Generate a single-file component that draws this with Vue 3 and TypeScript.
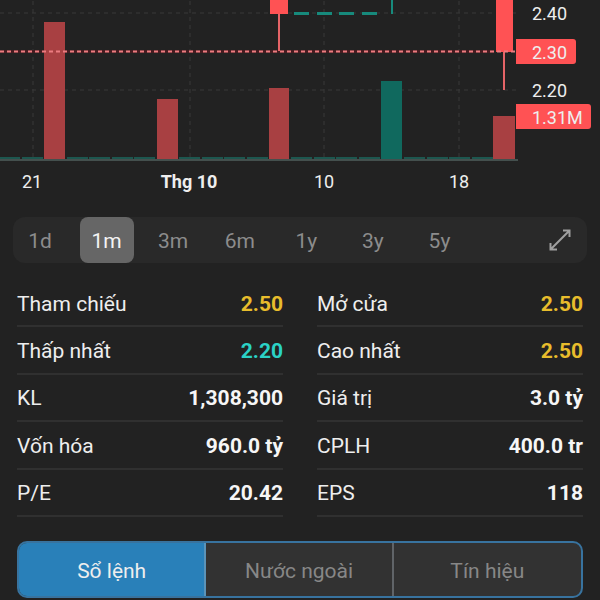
<script setup lang="ts">
import { ref } from 'vue'

interface Bar { x: number; y: number; w: number; up?: boolean }
interface Stat { label: string; value: string; tone?: 'ref' | 'floor' }

const gridX = [33, 190, 324, 459]
const gridY = [13, 90]

const bars: Bar[] = [
  { x: 44, y: 22, w: 21 },
  { x: 157, y: 99, w: 21 },
  { x: 269, y: 88, w: 20 },
  { x: 381, y: 81, w: 21, up: true },
  { x: 493, y: 116, w: 22 },
]
const smallBars = [-1, 22, 67, 89, 112, 134, 179, 202, 224, 247, 291, 314, 336, 359, 404, 427, 449, 472]
const flatCandles = [294, 317, 339, 362]

const dates = [
  { x: 32, text: '21' },
  { x: 189, text: 'Thg 10', strong: true },
  { x: 324, text: '10' },
  { x: 459, text: '18' },
]

const ranges = ['1d', '1m', '3m', '6m', '1y', '3y', '5y']
const range = ref('1m')

const stats: Stat[] = [
  { label: 'Tham chiếu', value: '2.50', tone: 'ref' },
  { label: 'Mở cửa', value: '2.50', tone: 'ref' },
  { label: 'Thấp nhất', value: '2.20', tone: 'floor' },
  { label: 'Cao nhất', value: '2.50', tone: 'ref' },
  { label: 'KL', value: '1,308,300' },
  { label: 'Giá trị', value: '3.0 tỷ' },
  { label: 'Vốn hóa', value: '960.0 tỷ' },
  { label: 'CPLH', value: '400.0 tr' },
  { label: 'P/E', value: '20.42' },
  { label: 'EPS', value: '118' },
]

const tabs = ['Sổ lệnh', 'Nước ngoài', 'Tín hiệu']
const tab = ref('Sổ lệnh')
</script>

<template>
  <main class="page">
    <svg class="chart" viewBox="0 0 600 204" role="img" aria-label="Biểu đồ giá">
      <g class="grid">
        <line v-for="x in gridX" :key="'x' + x" :x1="x" :x2="x" y1="1" y2="158" />
        <line v-for="y in gridY" :key="'y' + y" x1="0" x2="516" :y1="y" :y2="y" />
      </g>

      <rect v-for="x in smallBars" :key="'s' + x" class="small" :x="x" y="157" width="21" height="2" />
      <rect class="price-back" x="0" y="50" width="494" height="3" />
      <rect
        v-for="b in bars"
        :key="'b' + b.x"
        :class="b.up ? 'vol-up' : 'vol-down'"
        :x="b.x"
        :y="b.y"
        :width="b.w"
        :height="159 - b.y"
      />
      <rect class="axis" x="0" y="159" width="518" height="2" />

      <rect class="down" x="270" y="0" width="18" height="14" />
      <rect class="wick-down" x="278" y="14" width="2" height="37" />
      <rect v-for="x in flatCandles" :key="'f' + x" class="up" :x="x" y="12" width="15" height="3" />
      <rect class="up" x="391" y="0" width="2" height="14" />
      <rect class="down" x="496" y="0" width="17" height="52" />
      <rect class="wick-down" x="503" y="52" width="2" height="38" />

      <line class="price" x1="0" x2="517" y1="51.5" y2="51.5" />

      <path class="down" d="M516 39h57a3 3 0 0 1 3 3v19a3 3 0 0 1-3 3h-57z" />
      <path class="down" d="M516 104h72a3 3 0 0 1 3 3v19a3 3 0 0 1-3 3h-72z" />

      <text class="tick" x="532" y="20">2.40</text>
      <text class="tick" x="532" y="59">2.30</text>
      <text class="tick" x="532" y="97">2.20</text>
      <text class="tick" x="532" y="124">1.31M</text>
      <text
        v-for="d in dates"
        :key="d.text"
        class="tick date"
        :class="{ strong: d.strong }"
        :x="d.x"
        y="188"
      >{{ d.text }}</text>
    </svg>

    <div class="ranges">
      <div class="range-list">
        <button
          v-for="r in ranges"
          :key="r"
          type="button"
          class="range"
          :class="{ active: r === range }"
          :aria-pressed="r === range"
          @click="range = r"
        >{{ r }}</button>
      </div>
      <button type="button" class="expand" aria-label="Toàn màn hình">
        <svg viewBox="0 0 24 24" width="24" height="24">
          <path d="M2.5 21.5 21.5 2.5M15 2.5h6.5V9M2.5 15v6.5H9" />
        </svg>
      </button>
    </div>

    <dl class="stats">
      <div v-for="s in stats" :key="s.label" class="stat">
        <dt>{{ s.label }}</dt>
        <dd :class="s.tone">{{ s.value }}</dd>
      </div>
    </dl>

    <div class="tabs" role="tablist">
      <button
        v-for="t in tabs"
        :key="t"
        type="button"
        role="tab"
        class="tab"
        :class="{ active: t === tab }"
        :aria-selected="t === tab"
        @click="tab = t"
      >{{ t }}</button>
    </div>
  </main>
</template>

<style>
body {
  background: #222222;
}
</style>

<style scoped>
.page {
  font-family: Roboto, "Liberation Sans", sans-serif;
  color: #eeeeee;
  background: #222222;
  padding-bottom: 2px;
}

button {
  font: inherit;
  color: inherit;
  background: none;
  border: 0;
  padding: 0;
  cursor: pointer;
}

.chart {
  display: block;
  width: 100%;
}

.grid line {
  stroke: #393939;
  stroke-width: 1;
  stroke-dasharray: 4 4;
}

.small { fill: #1d574f; }
.axis { fill: #44504e; }
.vol-down { fill: #a84042; }
.vol-up { fill: #10695e; }
.down { fill: #ff5254; }
.wick-down { fill: #e56467; }
.up { fill: #178a7c; }
.price-back { fill: #451c21; }

.price {
  stroke: #ec7c80;
  stroke-width: 2;
  stroke-dasharray: 4 3;
}

.tick {
  font-size: 18px;
  fill: #eeeeee;
}

.date {
  text-anchor: middle;
}

.strong {
  font-weight: 700;
}

.ranges {
  display: flex;
  margin: 13px 13px 0;
  height: 46px;
  border-radius: 12px;
  background: #292929;
  font-size: 21px;
  color: #8c8c8c;
}

.range-list {
  flex: 1;
  display: flex;
  justify-content: space-between;
}

.range {
  width: 54px;
  padding-top: 2px;
  border-radius: 8px;
}

.range.active {
  background: #666666;
  color: #f4f4f4;
}

.expand {
  width: 21%;
  display: flex;
  align-items: center;
  justify-content: flex-end;
  padding-right: 15px;
}

.expand path {
  fill: none;
  stroke: #a0a0a0;
  stroke-width: 2;
}

.stats {
  display: grid;
  grid-template-columns: 1fr 1fr;
  grid-auto-rows: 1fr;
  column-gap: 34px;
  min-height: 237px;
  margin: 17px 17px 0;
  font-size: 21px;
}

.stat {
  display: flex;
  align-items: center;
  justify-content: space-between;
  padding-top: 2px;
  border-bottom: 2px solid #303030;
}

dd {
  margin: 0;
  font-weight: 700;
  color: #f6f6f6;
}

dd.ref { color: #e8bd2c; }
dd.floor { color: #2bd2c6; }

.tabs {
  display: grid;
  grid-template-columns: repeat(3, 1fr);
  height: 57px;
  box-sizing: border-box;
  margin: 24px 17px 0;
  border: 2px solid #38739f;
  border-radius: 10px;
  overflow: hidden;
  background: #323232;
  font-size: 21px;
  color: #878787;
}

.tab {
  padding-top: 2px;
  border-right: 2px solid #606468;
}

.tab:last-child {
  border-right: 0;
}

.tab.active {
  background: #2980b9;
  border-right-color: #5b93b8;
  color: #eeeeee;
}
</style>
